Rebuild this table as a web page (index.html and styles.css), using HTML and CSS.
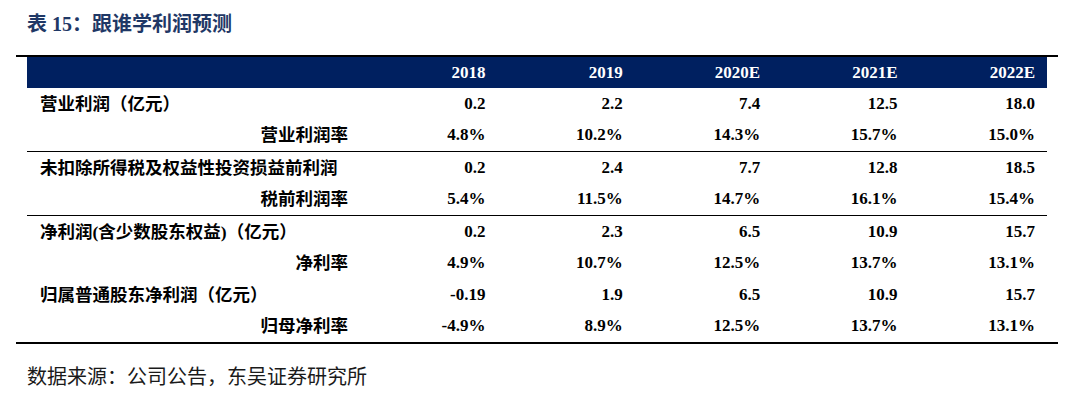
FILE: index.html
```html
<!DOCTYPE html>
<html lang="zh">
<head>
<meta charset="utf-8">
<title>表 15：跟谁学利润预测</title>
<link rel="stylesheet" href="styles.css">
</head>
<body>
<div class="page">
  <h1 class="title">表 <span class="num">15</span>：跟谁学利润预测</h1>
  <div class="frame">
    <table class="data">
      <colgroup>
        <col class="c-label">
        <col class="c-val"><col class="c-val"><col class="c-val"><col class="c-val"><col class="c-val">
      </colgroup>
      <thead>
        <tr class="head">
          <th></th><th>2018</th><th>2019</th><th>2020E</th><th>2021E</th><th>2022E</th>
        </tr>
      </thead>
      <tbody>
        <tr><td class="lab">营业利润（亿元）</td><td>0.2</td><td>2.2</td><td>7.4</td><td>12.5</td><td>18.0</td></tr>
        <tr><td class="lab sub">营业利润率</td><td>4.8%</td><td>10.2%</td><td>14.3%</td><td>15.7%</td><td>15.0%</td></tr>
      </tbody>
      <tbody class="grp">
        <tr><td class="lab">未扣除所得税及权益性投资损益前利润</td><td>0.2</td><td>2.4</td><td>7.7</td><td>12.8</td><td>18.5</td></tr>
        <tr><td class="lab sub">税前利润率</td><td>5.4%</td><td>11.5%</td><td>14.7%</td><td>16.1%</td><td>15.4%</td></tr>
      </tbody>
      <tbody class="grp">
        <tr><td class="lab">净利润(含少数股东权益)（亿元）</td><td>0.2</td><td>2.3</td><td>6.5</td><td>10.9</td><td>15.7</td></tr>
        <tr><td class="lab sub">净利率</td><td>4.9%</td><td>10.7%</td><td>12.5%</td><td>13.7%</td><td>13.1%</td></tr>
        <tr><td class="lab">归属普通股东净利润（亿元）</td><td>-0.19</td><td>1.9</td><td>6.5</td><td>10.9</td><td>15.7</td></tr>
        <tr><td class="lab sub">归母净利率</td><td>-4.9%</td><td>8.9%</td><td>12.5%</td><td>13.7%</td><td>13.1%</td></tr>
      </tbody>
    </table>
  </div>
  <p class="source">数据来源：公司公告，东吴证券研究所</p>
</div>
</body>
</html>
```

FILE: styles.css
```css
html, body {
  margin: 0;
  padding: 0;
  background: #ffffff;
}

.page {
  padding: 12px 13px 0 16px;
  width: 1042px;
}

.title {
  margin: 0 0 0 11px;
  font-family: "Liberation Serif", "Noto Sans CJK SC", serif;
  font-weight: 700;
  font-size: 20px;
  line-height: 24px;
  color: #1f3866;
}

.title .num {
  font-family: "Liberation Serif", serif;
}

.frame {
  margin-top: 19px;
  border-top: 2px solid #000000;
  border-bottom: 2px solid #000000;
  padding: 0 11px;
}

.data {
  width: 1020px;
  border-collapse: collapse;
  table-layout: fixed;
  font-family: "Liberation Serif", "Noto Sans CJK SC", serif;
  font-weight: 700;
  font-size: 17px;
  color: #000000;
}

.c-label { width: 333px; }
.c-val { width: 137.4px; }

.data th,
.data td {
  padding: 0 12px 0 0;
  text-align: right;
  white-space: nowrap;
  height: 31.5px;
  line-height: 20px;
}

.head th {
  background: #002060;
  color: #ffffff;
  height: 31px;
  font-weight: 700;
}

.data td.lab {
  text-align: left;
  padding-left: 13px;
  font-size: 17.5px;
}

.data td.lab.sub {
  text-align: right;
  padding-left: 0;
}

.grp tr:first-child td {
  border-top: 1px solid #000000;
}

.source {
  margin: 19px 0 0 11px;
  font-family: "Noto Sans CJK SC", sans-serif;
  font-weight: 400;
  font-size: 20px;
  line-height: 26px;
  color: #1a1a1a;
}
```
